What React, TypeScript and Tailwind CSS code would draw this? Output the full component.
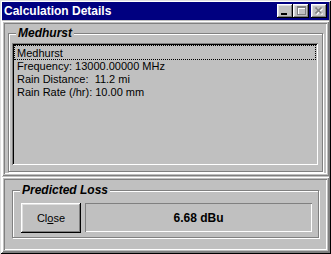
const raised = "shadow-[inset_1px_1px_0_#fff,inset_-1px_-1px_0_#808080]";
const lowered = "shadow-[inset_1px_1px_0_#808080,inset_-1px_-1px_0_#fff]";
const etched = "border border-[#808080] shadow-[inset_1px_1px_0_#fff,1px_1px_0_#fff]";

function TitleButton({ children }: { children: React.ReactNode }) {
  return (
    <div className="w-[16px] h-[14px] bg-[#c0c0c0] flex items-center justify-center shadow-[inset_-1px_-1px_0_#000,inset_1px_1px_0_#fff,inset_-2px_-2px_0_#808080,inset_2px_2px_0_#dfdfdf]">
      {children}
    </div>
  );
}

function GroupBox({ label, className, children }: { label: string; className: string; children: React.ReactNode }) {
  return (
    <div className={`relative ${etched} ${className}`}>
      <span className="absolute left-[7px] top-[-8px] bg-[#c0c0c0] px-[2px] text-[12px] leading-[14px] font-bold italic text-black">
        {label}
      </span>
      {children}
    </div>
  );
}

export default function App() {
  const lines = ["Frequency: 13000.00000 MHz", "Rain Distance:  11.2 mi", "Rain Rate (/hr): 10.00 mm"];

  return (
    <div className="w-[331px] h-[254px] bg-[#c0c0c0] p-[2px] flex flex-col font-['Liberation_Sans',Arial,sans-serif] shadow-[inset_1px_1px_0_#dfdfdf,inset_-1px_-1px_0_#000,inset_2px_2px_0_#fff,inset_-2px_-2px_0_#808080]">
      {/* title bar */}
      <div className="h-[18px] bg-[#000080] flex items-center justify-between pl-[2px] pr-[2px]">
        <span className="text-white text-[12px] font-bold leading-none whitespace-pre">Calculation Details</span>
        <div className="flex items-center">
          <TitleButton>
            <div className="w-[6px] h-[2px] bg-black mt-[6px] mr-[2px]" />
          </TitleButton>
          <TitleButton>
            <svg width="9" height="9" viewBox="0 0 9 9" className="mb-[1px]">
              <rect x="1.5" y="1.5" width="8" height="8" fill="none" stroke="#fff" />
              <rect x="1" y="2" width="8" height="1" fill="#fff" />
              <rect x="0.5" y="0.5" width="8" height="8" fill="none" stroke="#808080" />
              <rect x="0" y="1" width="9" height="1" fill="#808080" />
            </svg>
          </TitleButton>
          <div className="ml-[2px]">
            <TitleButton>
              <svg width="9" height="8" viewBox="0 0 9 8" className="mb-[1px]">
                <path d="M1.5 1.5 L7.5 7.5 M7.5 1.5 L1.5 7.5" stroke="#fff" strokeWidth="1.6" />
                <path d="M0.5 0.5 L6.5 6.5 M6.5 0.5 L0.5 6.5" stroke="#808080" strokeWidth="1.6" />
              </svg>
            </TitleButton>
          </div>
        </div>
      </div>

      {/* top panel */}
      <div className={`mt-[1px] h-[155px] p-[2px] ${raised}`}>
        <div className={`h-full pt-[10px] px-[4px] pb-[3px] ${lowered}`}>
          <GroupBox label="Medhurst" className="h-[139px] pt-[9px] pl-[3px] pr-[4px] pb-[6px]">
            <div className="h-full p-[2px] shadow-[inset_1px_1px_0_#808080,inset_-1px_-1px_0_#fff,inset_2px_2px_0_#000,inset_-2px_-2px_0_#c0c0c0] text-[11px] leading-[13px] text-black">
              <div className="border border-dotted border-black pl-[2px] pt-[1px] h-[15px] leading-[13px]">Medhurst</div>
              {lines.map((l) => (
                <div key={l} className="pl-[3px] whitespace-pre">
                  {l}
                </div>
              ))}
            </div>
          </GroupBox>
        </div>
      </div>

      {/* bottom panel */}
      <div className={`mt-[1px] flex-1 p-[2px] ${raised}`}>
        <div className={`h-full pt-[11px] pl-[8px] pr-[8px] pb-[4px] ${lowered}`}>
          <GroupBox label="Predicted Loss" className="h-[48px] pt-[12px] pl-[8px] pr-[6px] flex gap-[4px]">
            <button className="w-[60px] h-[30px] bg-[#c0c0c0] text-[11px] text-black shadow-[inset_-1px_-1px_0_#000,inset_1px_1px_0_#fff,inset_-2px_-2px_0_#808080,inset_2px_2px_0_#dfdfdf]">
              Cl<span className="underline">o</span>se
            </button>
            <div className={`flex-1 h-[29px] flex items-center justify-center text-[12px] font-bold text-black ${lowered}`}>
              6.68 dBu
            </div>
          </GroupBox>
        </div>
      </div>
    </div>
  );
}
